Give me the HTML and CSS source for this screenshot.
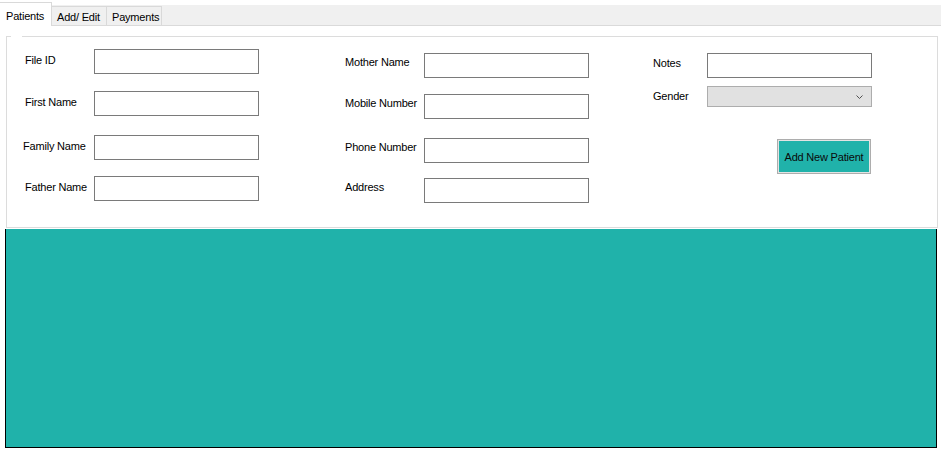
FILE: index.html
```html
<!DOCTYPE html>
<html>
<head>
<meta charset="utf-8">
<link rel="stylesheet" href="styles.css">
</head>
<body>
<div class="tabbar">
  <div class="tab active">Patients</div>
  <div class="tab">Add/ Edit</div>
  <div class="tab">Payments</div>
</div>
<div class="page">
  <div class="group">
    <div class="col col1">
      <div class="row"><span class="lbl">File ID</span><span class="box"></span></div>
      <div class="row g17"><span class="lbl">First Name</span><span class="box"></span></div>
      <div class="row g19"><span class="lbl lbl-flush">Family Name</span><span class="box"></span></div>
      <div class="row g16"><span class="lbl">Father Name</span><span class="box"></span></div>
    </div>
    <div class="col col2">
      <div class="row"><span class="lbl">Mother Name</span><span class="box"></span></div>
      <div class="row g16"><span class="lbl">Mobile Number</span><span class="box"></span></div>
      <div class="row g19"><span class="lbl">Phone Number</span><span class="box"></span></div>
      <div class="row g15"><span class="lbl">Address</span><span class="box"></span></div>
    </div>
    <div class="col col3">
      <div class="row"><span class="lbl">Notes</span><span class="box"></span></div>
      <div class="row combo-row"><span class="lbl">Gender</span>
        <span class="combo"><svg class="chev" width="7" height="4" viewBox="0 0 7 4"><path d="M0.5 0.5 L3.5 3.5 L6.5 0.5" fill="none" stroke="#505050" stroke-width="1"/></svg></span>
      </div>
      <div class="btn">Add New Patient</div>
    </div>
  </div>
  <div class="panel"></div>
</div>
</body>
</html>
```
FILE: styles.css
```css
html, body {
  margin: 0;
  padding: 0;
  background: #ffffff;
}
body {
  font-family: "Liberation Sans", Arial, sans-serif;
  font-size: 11px;
  letter-spacing: -0.2px;
  color: #000;
  width: 941px;
  height: 453px;
  overflow: hidden;
}
.tabbar {
  margin-top: 5px;
  height: 20px;
  background: #f0f0f0;
  border-bottom: 1px solid #dadada;
  display: flex;
  align-items: flex-start;
}
.tab {
  box-sizing: border-box;
  margin-top: 1px;
  height: 19px;
  width: 55px;
  padding-left: 5px;
  padding-top: 1px;
  line-height: 18px;
  border-top: 1px solid #d9d9d9;
  border-right: 1px solid #d9d9d9;
  background: #f0f0f0;
  white-space: nowrap;
}
.tab.active {
  margin-top: -3px;
  height: 24px;
  width: 52px;
  padding-left: 6px;
  padding-top: 3px;
  line-height: 21px;
  background: #ffffff;
}
.page {
  padding-top: 10px;
}
.group {
  position: relative;
  box-sizing: border-box;
  margin-left: 6px;
  width: 932px;
  height: 192px;
  border: 1px solid #dcdcdc;
  display: flex;
  padding-left: 16px;
}
.group::before {
  content: "";
  position: absolute;
  left: 4px;
  top: -1px;
  width: 11px;
  height: 1px;
  background: #ffffff;
}
.col {
  display: flex;
  flex-direction: column;
}
.col1 {
  padding-top: 12px;
}
.col2 {
  padding-top: 16px;
  margin-left: 86px;
}
.col3 {
  padding-top: 16px;
  margin-left: 64px;
}
.row {
  display: flex;
  align-items: center;
  height: 25px;
}
.g15 { margin-top: 15px; }
.g16 { margin-top: 16px; }
.g17 { margin-top: 17px; }
.g19 { margin-top: 19px; }
.lbl {
  line-height: 13px;
  white-space: nowrap;
}
.col1 .lbl {
  width: 71px;
  box-sizing: border-box;
  padding-left: 2px;
  margin-bottom: 3px;
}
.col1 .lbl-flush {
  padding-left: 0;
}
.col2 .lbl {
  width: 79px;
  margin-bottom: 7px;
}
.col3 .lbl {
  width: 54px;
  margin-bottom: 4px;
}
.box {
  box-sizing: border-box;
  width: 165px;
  height: 25px;
  border: 1px solid #7a7a7a;
  background: #ffffff;
}
.combo-row {
  margin-top: 8px;
  height: 21px;
}
.combo-row .lbl {
  margin-bottom: 1px;
}
.combo {
  box-sizing: border-box;
  width: 165px;
  height: 21px;
  border: 1px solid #adadad;
  background: #e1e1e1;
  display: flex;
  align-items: center;
  justify-content: flex-end;
  padding-right: 8px;
}
.chev {
  display: block;
}
.btn {
  box-sizing: border-box;
  align-self: flex-end;
  margin-top: 32px;
  margin-right: 1px;
  width: 94px;
  height: 35px;
  border: 1px solid #adadad;
  box-shadow: inset 0 0 0 1px #e3e3e3;
  background: #20b2aa;
  display: flex;
  align-items: center;
  justify-content: center;
  color: #0a0a0a;
  white-space: nowrap;
}
.panel {
  box-sizing: border-box;
  margin-top: 1px;
  margin-left: 5px;
  width: 932px;
  height: 219px;
  background: #20b2aa;
  border: 1px solid #000;
  border-top: none;
}
```
